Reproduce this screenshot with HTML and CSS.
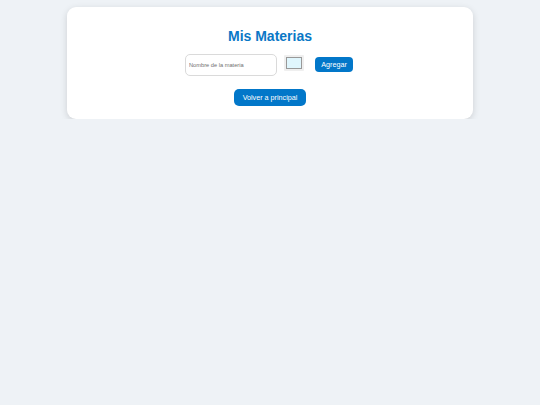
FILE: index.html
```html
<!DOCTYPE html>
<html lang="es">
<head>
<meta charset="utf-8">
<title>Mis Materias</title>
<link rel="stylesheet" href="styles.css">
</head>
<body>
<div class="card">
  <h1 class="title">Mis Materias</h1>
  <div class="form-row">
    <input class="name-input" type="text" placeholder="Nombre de la materia">
    <input class="color-input" type="color" value="#e0f6fd">
    <button class="btn btn-add">Agregar</button>
  </div>
  <div class="back-row">
    <button class="btn btn-back">Volver a principal</button>
  </div>
</div>
</body>
</html>
```
FILE: styles.css
```css
html, body {
  margin: 0;
  padding: 0;
  background: #eef2f6;
  font-family: "Liberation Sans", Arial, sans-serif;
}

.card {
  width: 406px;
  box-sizing: border-box;
  margin: 7px auto 0;
  background: #ffffff;
  border-radius: 9px;
  box-shadow: 0 2px 7px rgba(0, 0, 0, 0.14);
  padding: 21px 0 13px;
}

.title {
  margin: 0;
  text-align: center;
  font-size: 14px;
  line-height: 17px;
  font-weight: bold;
  color: #0a78c6;
}

.form-row {
  margin-top: 9px;
  display: flex;
  justify-content: center;
  align-items: center;
  padding-right: 2px;
}

.name-input {
  width: 92px;
  height: 22px;
  box-sizing: border-box;
  border: 1px solid #dadada;
  border-radius: 5px;
  padding: 0 3px;
  font-family: "Liberation Sans", Arial, sans-serif;
  font-size: 5.7px;
  color: #333;
  outline: none;
}

.name-input::placeholder {
  color: #6f6f6f;
}

.color-input {
  -webkit-appearance: none;
  appearance: none;
  width: 20px;
  height: 16px;
  box-sizing: border-box;
  margin: 0 11px 5px 7px;
  padding: 2px;
  border: none;
  border-radius: 1px;
  background: #efefef;
  cursor: pointer;
}

.color-input::-webkit-color-swatch-wrapper {
  padding: 0;
}

.color-input::-webkit-color-swatch {
  border: 1px solid #999999;
  border-radius: 0;
}

.btn {
  border: none;
  background: #0277c9;
  color: #ffffff;
  font-family: "Liberation Sans", Arial, sans-serif;
  cursor: pointer;
}

.btn-add {
  width: 38px;
  height: 15px;
  padding: 0;
  font-size: 7.2px;
  border-radius: 4px;
  margin-top: -1px;
}

.back-row {
  margin-top: 13px;
  display: flex;
  justify-content: center;
}

.btn-back {
  width: 72px;
  height: 17px;
  padding: 0;
  font-size: 7.2px;
  border-radius: 5px;
}
```
